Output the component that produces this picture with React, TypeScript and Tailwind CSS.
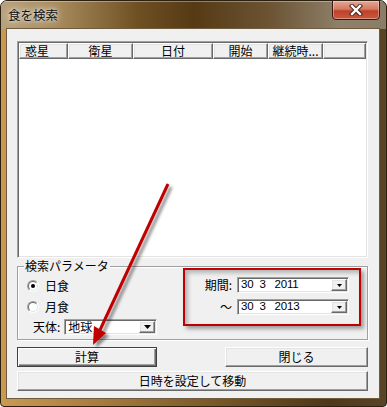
import React from 'react'

const jp = "font-['Noto_Sans_CJK_JP','Liberation_Sans',sans-serif]"
const num = "font-['Liberation_Sans',sans-serif]"

// classic 3D edges
const raised =
    'border border-t-white border-l-white border-b-[#696969] border-r-[#696969] shadow-[inset_-1px_-1px_0_#a0a0a0,inset_1px_1px_0_#e3e3e3]'
const sunken =
    'border border-t-[#a0a0a0] border-l-[#a0a0a0] border-b-white border-r-white shadow-[inset_1px_1px_0_#696969,inset_-1px_-1px_0_#e3e3e3]'

const columns = [
    { label: '惑星', w: 'w-[49px]', align: 'justify-start pl-[5px]' },
    { label: '衛星', w: 'w-[65px]', align: 'justify-center' },
    { label: '日付', w: 'w-[80px]', align: 'justify-center' },
    { label: '開始', w: 'w-[55px]', align: 'justify-center' },
    { label: '継続時...', w: 'w-[55px]', align: 'justify-center' },
]

function DownArrow({ small }: { small?: boolean }) {
    return small ? (
        <svg width="5" height="3" viewBox="0 0 5 3">
            <path d="M0 0h5L2.5 3z" fill="#000" />
        </svg>
    ) : (
        <svg width="7" height="4" viewBox="0 0 7 4">
            <path d="M0 0h7L3.5 4z" fill="#000" />
        </svg>
    )
}

function Radio({ checked, label }: { checked?: boolean; label: string }) {
    return (
        <div className="flex items-center h-[13px] gap-[6px]">
            <span className="w-[12px] h-[12px] rounded-full border border-t-[#a0a0a0] border-l-[#a0a0a0] border-b-white border-r-white flex">
                <span className="flex-1 rounded-full border border-t-[#696969] border-l-[#696969] border-b-[#e3e3e3] border-r-[#e3e3e3] bg-white flex items-center justify-center">
                    {checked && <span className="w-[4px] h-[4px] rounded-full bg-black" />}
                </span>
            </span>
            <span className="text-[12px] leading-[14px]">{label}</span>
        </div>
    )
}

function DatePicker({ d, m, y }: { d: string; m: string; y: string }) {
    return (
        <div className={`w-[112px] h-[16px] bg-white p-px flex ${sunken}`}>
            <div className={`flex-1 flex items-center pl-[2px] text-[11.5px] leading-none tracking-[-0.2px] ${num}`}>
                <span>{d}</span>
                <span className="ml-[6px]">{m}</span>
                <span className="ml-[9px]">{y}</span>
            </div>
            <div className={`w-[16px] bg-[#f0f0f0] flex items-center justify-center ${raised}`}>
                <DownArrow small />
            </div>
        </div>
    )
}

function Button({ label, w, isDefault }: { label: string; w: string; isDefault?: boolean }) {
    return (
        <button
            className={`${w} h-[20px] bg-[#f0f0f0] flex items-center justify-center text-[12px] leading-none ${
                isDefault
                    ? 'border border-[#404040] shadow-[inset_1px_1px_0_#fff,inset_-1px_-1px_0_#696969,inset_-2px_-2px_0_#a0a0a0]'
                    : raised
            }`}
        >
            {label}
        </button>
    )
}

export default function App() {
    return (
        <div className={`relative w-[387px] h-[407px] overflow-hidden rounded-t-[7px] rounded-b-[4px] border border-[#2c2010] bg-[linear-gradient(90deg,#c89a52_0%,#a87c40_25%,#7a5828_55%,#4e3818_85%,#5a4426_100%)] flex flex-col text-black ${jp}`}>
            {/* title bar */}
            <div className="h-[28px] flex bg-[linear-gradient(90deg,#b8a27e_0%,#a68a5c_15%,#6e4f22_36%,#553a14_50%,#6c5434_70%,#8e806a_88%,#8a7c66_100%)] shadow-[inset_0_1px_0_rgba(255,255,255,0.35)]">
                <span className="self-center pl-[7px] text-[12.5px] leading-none text-[#101010] [text-shadow:0_0_8px_rgba(255,255,255,0.95),0_0_3px_rgba(255,255,255,0.8)]">
                    食を検索
                </span>
                <div className="ml-auto mr-[6px] -mt-px w-[48px] h-[20px] rounded-b-[4px] border border-[#3a1a10] bg-[linear-gradient(180deg,#e6a696_0%,#d47a62_45%,#c0402a_55%,#c85a3e_100%)] shadow-[inset_0_0_0_1px_rgba(255,255,255,0.35)] flex items-center justify-center">
                    <svg width="14" height="12" viewBox="0 0 14 12">
                        <path d="M3 2l8 8M11 2l-8 8" stroke="#3a2018" strokeWidth="4.2" strokeLinecap="square" />
                        <path d="M3 2l8 8M11 2l-8 8" stroke="#fff" strokeWidth="2.4" strokeLinecap="square" />
                    </svg>
                </div>
            </div>

            {/* client area */}
            <div className="ml-[6px] w-[372px] h-[369px] bg-[#f0f0f0] shadow-[0_0_0_1px_#6e5c3e] pl-[10px] pt-[12px]">
                {/* list view */}
                <div className={`w-[351px] h-[217px] bg-white p-px ${sunken}`}>
                    <div className="flex h-[16px]">
                        {columns.map((c) => (
                            <div key={c.label} className={`${c.w} ${c.align} h-full bg-[#f0f0f0] flex items-center text-[12px] leading-none whitespace-nowrap overflow-hidden ${raised}`}>
                                {c.label}
                            </div>
                        ))}
                        <div className={`flex-1 h-full bg-[#f0f0f0] ${raised}`} />
                    </div>
                </div>

                {/* search parameters */}
                <div className="relative mt-[8px] w-[351px] h-[74px] border border-[#a0a0a0] shadow-[inset_1px_1px_0_#fff,1px_1px_0_#fff] flex">
                    <span className="absolute -top-[8px] left-[6px] px-[1px] bg-[#f0f0f0] text-[12px] leading-[14px]">
                        検索パラメータ
                    </span>
                    <div className="pl-[9px] pt-[12px] flex flex-col">
                        <Radio checked label="日食" />
                        <div className="mt-[8px]">
                            <Radio label="月食" />
                        </div>
                        <div className="mt-[6px] ml-[6px] flex items-center gap-[4px]">
                            <span className="text-[12px] leading-none">天体:</span>
                            <div className={`w-[93px] h-[16px] bg-white p-px flex ${sunken}`}>
                                <span className="flex-1 pl-[2px] flex items-center text-[12px] leading-none">地球</span>
                                <div className={`w-[16px] bg-[#f0f0f0] flex items-center justify-center ${raised}`}>
                                    <DownArrow />
                                </div>
                            </div>
                        </div>
                    </div>
                    <div className="ml-auto mr-[18px] pt-[10px] flex flex-col gap-[6px]">
                        <div className="flex items-center gap-[5px]">
                            <span className="w-[30px] text-right text-[12px] leading-none">期間:</span>
                            <DatePicker d="30" m="3" y="2011" />
                        </div>
                        <div className="flex items-center gap-[5px]">
                            <span className="w-[30px] text-right text-[12px] leading-none">～</span>
                            <DatePicker d="30" m="3" y="2013" />
                        </div>
                    </div>
                </div>

                {/* buttons */}
                <div className="mt-[7px] w-[351px] flex">
                    <Button label="計算" w="w-[140px]" isDefault />
                    <div className="ml-auto">
                        <Button label="閉じる" w="w-[143px]" />
                    </div>
                </div>
                <div className="mt-[4px]">
                    <Button label="日時を設定して移動" w="w-[351px]" />
                </div>
            </div>

            {/* annotation overlay */}
            <div className="absolute left-[182px] top-[267px] w-[178px] h-[58px] border-2 border-[#c00000] shadow-[3px_3px_4px_rgba(0,0,0,0.35),inset_3px_3px_4px_rgba(0,0,0,0.25)] pointer-events-none" />
            <svg className="absolute -left-px -top-px pointer-events-none" width="387" height="407">
                <defs>
                    <filter id="arrowShadow" x="-50%" y="-50%" width="200%" height="200%">
                        <feDropShadow dx="3" dy="3" stdDeviation="1.8" floodColor="#000" floodOpacity="0.45" />
                    </filter>
                </defs>
                <g filter="url(#arrowShadow)">
                    <line x1="168" y1="184" x2="100" y2="330" stroke="#c00000" strokeWidth="3" />
                    <polygon points="93,345 106,333 94,326" fill="#c00000" />
                </g>
            </svg>
        </div>
    )
}
